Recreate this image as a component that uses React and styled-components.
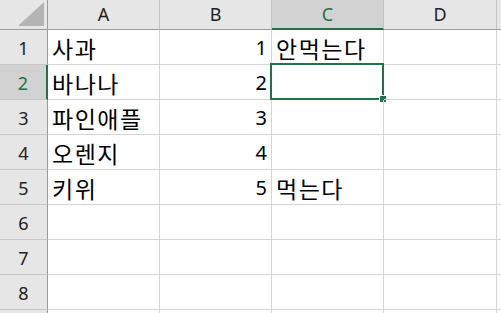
import React from 'react';
import styled, { createGlobalStyle } from 'styled-components';

const GlobalStyle = createGlobalStyle`
    html, body {
        margin: 0;
        padding: 0;
        background: #ffffff;
        overflow: hidden;
    }
`;

const GREEN = '#217346';
const GRID = '#d4d4d4';
const HEAD_LINE = '#9b9b9b';

const Sheet = styled.div`
    display: grid;
    grid-template-columns: 48px 112px 112px 112px 113px 1fr;
    grid-template-rows: 30px repeat(9, 35px);
    width: 501px;
    height: 313px;
    overflow: hidden;
    font-family: 'Noto Sans', 'Noto Sans CJK KR', sans-serif;
    color: #000000;
`;

const Corner = styled.div`
    display: flex;
    align-items: flex-end;
    justify-content: flex-end;
    padding: 3px;
    background: #e6e6e6;
    border-right: 1px solid ${HEAD_LINE};
    border-bottom: 1px solid ${HEAD_LINE};
    box-sizing: border-box;
`;

const Triangle = styled.div`
    width: 26px;
    height: 24px;
    background: #b4b4b4;
    clip-path: polygon(100% 0, 100% 100%, 0 100%);
`;

const ColHead = styled.div`
    box-sizing: border-box;
    background: ${p => (p.$active ? '#d2d2d2' : '#e6e6e6')};
    color: ${p => (p.$active ? GREEN : '#222222')};
    border-right: 1px solid #c2c2c2;
    border-bottom: ${p => (p.$active ? `2px solid ${GREEN}` : `1px solid ${HEAD_LINE}`)};
    font-size: 18px;
    text-align: center;
    line-height: 28px;
`;

const RowHead = styled.div`
    box-sizing: border-box;
    background: ${p => (p.$active ? '#d2d2d2' : '#e6e6e6')};
    color: ${p => (p.$active ? GREEN : '#222222')};
    border-right: ${p => (p.$active ? `2px solid ${GREEN}` : `1px solid ${HEAD_LINE}`)};
    border-bottom: 1px solid #c8c8c8;
    font-size: 18px;
    text-align: center;
    line-height: 36px;
`;

const Cell = styled.div`
    position: relative;
    box-sizing: border-box;
    border-right: 1px solid ${GRID};
    border-bottom: 1px solid ${GRID};
    padding: 0 4px;
    white-space: nowrap;
    text-align: ${p => (p.$num ? 'right' : 'left')};
    font-family: ${p => (p.$num ? "'Noto Sans', sans-serif" : "'Noto Sans CJK KR', sans-serif")};
    font-size: ${p => (p.$num ? '20px' : '23px')};
    letter-spacing: ${p => (p.$num ? '0' : '1.5px')};
    line-height: 36px;
`;

const Selection = styled.div`
    position: absolute;
    top: -2px;
    left: -2px;
    right: -1px;
    bottom: -1px;
    border: 2px solid ${GREEN};
    pointer-events: none;
`;

const Handle = styled.div`
    position: absolute;
    right: -5px;
    bottom: -5px;
    width: 6px;
    height: 6px;
    background: ${GREEN};
    border: 1px solid #ffffff;
`;

const columns = ['A', 'B', 'C', 'D', ''];

const rows = [
    ['사과', '1', '안먹는다', ''],
    ['바나나', '2', '', ''],
    ['파인애플', '3', '', ''],
    ['오렌지', '4', '', ''],
    ['키위', '5', '먹는다', ''],
    ['', '', '', ''],
    ['', '', '', ''],
    ['', '', '', ''],
    ['', '', '', ''],
];

export default function App() {
    return (
        <>
            <GlobalStyle />
            <Sheet>
                <Corner>
                    <Triangle />
                </Corner>
                {columns.map((c, i) => (
                    <ColHead key={i} $active={c === 'C'}>{c}</ColHead>
                ))}
                {rows.map((r, ri) => (
                    <React.Fragment key={ri}>
                        {/* last row only peeks in at the bottom edge, its number is out of view */}
                        <RowHead $active={ri === 1}>{ri < 8 ? ri + 1 : ''}</RowHead>
                        {r.map((v, ci) => (
                            <Cell key={ci} $num={ci === 1}>
                                {v}
                                {ri === 1 && ci === 2 && (
                                    <Selection>
                                        <Handle />
                                    </Selection>
                                )}
                            </Cell>
                        ))}
                        <Cell />
                    </React.Fragment>
                ))}
            </Sheet>
        </>
    );
}
